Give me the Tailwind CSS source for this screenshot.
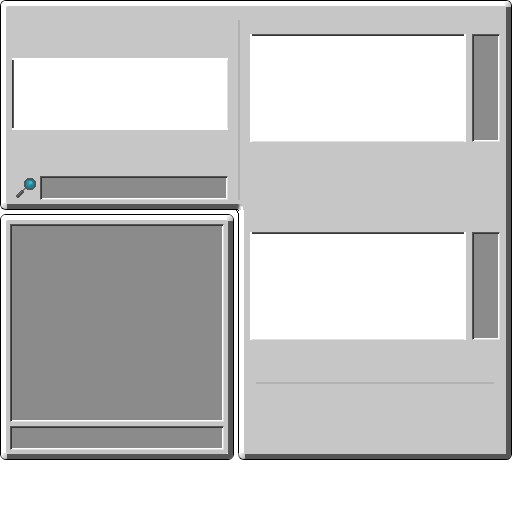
<!DOCTYPE html>
<html lang="en">
<head>
<meta charset="utf-8">
<meta name="viewport" content="width=device-width, initial-scale=1">
<title>Inventory</title>
<script src="https://cdn.jsdelivr.net/npm/@tailwindcss/browser@4"></script>
</head>
<body class="bg-white">
<main class="grid grid-cols-[minmax(0,238fr)_minmax(0,274fr)]">

  <!-- Left column: search window above the detached inventory window -->
  <div class="flex flex-col gap-1">
    <section aria-label="Search" class="relative rounded-l-[6px] border border-r-0 border-black bg-white">
      <div class="overflow-hidden rounded-l-[5px] border-5 border-r-0 border-t-white border-l-white border-b-[#555555]">
        <div class="rounded-tl-[2px] bg-[#c6c6c6] pt-13 pr-2.5 pb-1 pl-1.5">
          <div class="bg-white py-0.5">
            <div class="h-17 border-l border-r border-l-[#373737] border-r-[#dedede] shadow-[inset_1px_0_0_#555555]"></div>
          </div>
          <div class="mt-11.5 flex">
            <label for="search" class="w-7 shrink-0 pt-0.5 pl-1" aria-label="Search">
              <svg class="size-5" viewBox="0 0 20 20" shape-rendering="crispEdges" aria-hidden="true">
                <path fill="#555" d="M11 0h6v1h1v1h1v1h1v6h-1v1h-1v1h-1v1h-6v-1h-1v-1H9V9H8V3h1V2h1V1h1z"/>
                <path fill="#1f7f90" d="M11 2h6v1h1v6h-1v1h-6V9h-1V3h1z"/>
                <path fill="#2299aa" d="M11 3h5v1h1v3h-2v1h-3V7h-1z"/>
                <path fill="#3bb5c4" d="M13 3h3v3h-3z"/>
                <path fill="#707070" d="M8 10h2v1H9v1H8v1H7v-2h1z"/>
                <path fill="#505050" d="M5 12h2v1h1v2H7v1H6v1H5v1H4v1H3v1H1v-1H0v-2h1v-1h1v-1h1v-1h1v-1h1z"/>
                <path fill="#777" d="M5 13h1v1H5zM4 14h1v1H4zM3 15h1v1H3zM2 16h1v1H2zM1 17h1v1H1z"/>
              </svg>
            </label>
            <input id="search" type="text" class="h-6 w-full min-w-0 border border-t-[#555555] border-r-[#dedede] border-b-[#dedede] border-l-[#555555] bg-[#8b8b8b] px-1 text-sm text-white shadow-[inset_1px_1px_0_#373737,inset_-1px_-1px_0_#ffffff] outline-none">
          </div>
        </div>
      </div>
      <div class="absolute bottom-0 left-0 size-1.5 rounded-bl-[5px] bg-linear-to-br from-white to-[#b0b0b0]"></div>
    </section>

    <section aria-label="Inventory" class="relative mr-1 rounded-[6px] border border-black">
      <div class="overflow-hidden rounded-[5px] border-5 border-t-white border-r-[#555555] border-b-[#555555] border-l-white">
        <div class="flex flex-col gap-1 rounded-[2px] bg-[#c6c6c6] p-1">
          <div class="h-49.5 border border-t-[#555555] border-r-[#dedede] border-b-[#dedede] border-l-[#555555] bg-[#8b8b8b] shadow-[inset_1px_1px_0_#373737,inset_-1px_-1px_0_#ffffff]"></div>
          <div class="h-6 border border-t-[#555555] border-r-[#dedede] border-b-[#dedede] border-l-[#555555] bg-[#8b8b8b] shadow-[inset_1px_1px_0_#373737,inset_-1px_-1px_0_#ffffff]"></div>
        </div>
      </div>
      <div class="absolute bottom-0 left-0 size-1.5 rounded-bl-[5px] bg-linear-to-br from-white to-[#b0b0b0]"></div>
      <div class="absolute top-0 right-0 size-1.5 rounded-tr-[5px] bg-linear-to-br from-white to-[#b0b0b0]"></div>
    </section>
  </div>

  <!-- Right column: joined to the search window, with its own left edge lower down -->
  <section aria-label="Storage" class="relative rounded-r-[6px] rounded-bl-[6px] border border-l-0 border-black bg-[#c6c6c6]">
    <div class="flex overflow-hidden rounded-r-[5px] rounded-bl-[6px] border-5 border-l-0 border-t-white border-r-[#555555] border-b-[#555555]">
      <div class="-mb-1.5 flex w-1.5 shrink-0 flex-col">
        <div class="mt-3.5 h-45 w-0.5 bg-[#b2b2b2]"></div>
        <div class="mt-2.5 flex-1 border-l border-black bg-white"></div>
      </div>
      <div class="flex min-w-0 flex-1 flex-col rounded-br-[2px] bg-[#c6c6c6] px-1.5 pt-7 pb-17.5">
        <div class="flex gap-1.5">
          <div class="flex-1 bg-white px-0.5">
            <div class="h-27 border-t border-b border-t-[#555555] border-b-[#dedede] shadow-[inset_0_1px_0_#373737]"></div>
          </div>
          <div class="h-27 w-7 border border-t-[#555555] border-r-[#dedede] border-b-[#dedede] border-l-[#555555] bg-[#8b8b8b] shadow-[inset_1px_1px_0_#373737,inset_-1px_-1px_0_#ffffff]"></div>
        </div>
        <div class="mt-22.5 flex gap-1.5">
          <div class="flex-1 bg-white px-0.5">
            <div class="h-27 border-t border-b border-t-[#555555] border-b-[#dedede] shadow-[inset_0_1px_0_#373737]"></div>
          </div>
          <div class="h-27 w-7 border border-t-[#555555] border-r-[#dedede] border-b-[#dedede] border-l-[#555555] bg-[#8b8b8b] shadow-[inset_1px_1px_0_#373737,inset_-1px_-1px_0_#ffffff]"></div>
        </div>
        <div class="mx-1.5 mt-10.5 h-0.5 bg-[#b2b2b2]"></div>
      </div>
    </div>
    <div class="absolute top-0 right-0 size-1.5 rounded-tr-[5px] bg-linear-to-br from-white to-[#b0b0b0]"></div>
    <div class="absolute bottom-0 left-px size-1.5 rounded-bl-[5px] bg-linear-to-br from-white to-[#b0b0b0]"></div>
    <!-- Inner corner where the two windows join -->
    <svg class="absolute top-50.5 -left-1 h-3.5 w-3" viewBox="0 0 12 14" shape-rendering="crispEdges" aria-hidden="true">
      <path fill="#c6c6c6" d="M0 0h12v14h-2V0H0z"/>
      <path fill="#fff" d="M0 8h5v6H0zM5 7h5v7H5z"/>
      <path fill="#555" d="M0 1h4v5H0z"/>
      <path fill="#777" d="M4 1h1v4H4zM3 5h2v1H3z"/>
      <path fill="#999" d="M5 1h1v4H5z"/>
      <path fill="#bbb" d="M6 1h2v3H6zM5 4h1v2H5z"/>
      <path fill="#ddd" d="M6 3h3v3H6z"/>
      <path fill="#fff" d="M7 4h2v3H7z"/>
      <path fill="#000" d="M0 6h2v1H0zM2 7h1v1H2zM3 8h1v2H3zM4 10h1v4H4zM2 6h1v1H2z"/>
    </svg>
  </section>
</main>
</body>
</html>
